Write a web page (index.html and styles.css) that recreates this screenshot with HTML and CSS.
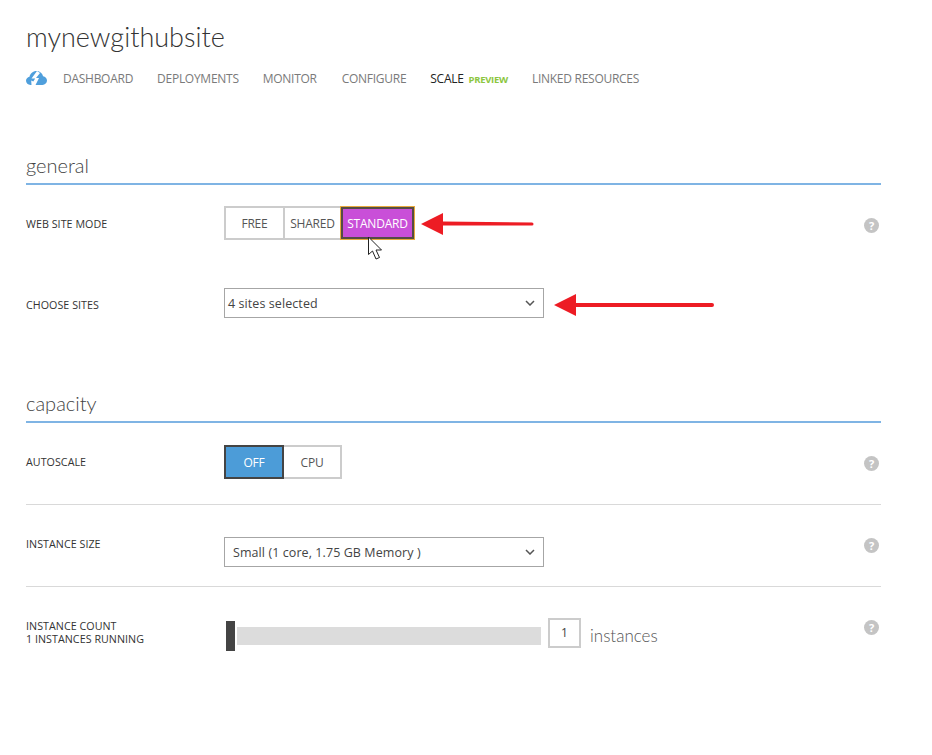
FILE: index.html
```html
<!DOCTYPE html>
<html lang="en">
<head>
  <meta charset="UTF-8" />
  <title>mynewgithubsite - scale</title>
  <link rel="stylesheet" href="styles.css">
</head>
<body>
  <h1 class="site-title">mynewgithubsite</h1>

  <nav class="tabs">
    <svg class="cloud" width="21" height="14" viewBox="0 0 21 14">
      <path fill="#4f9fdc" d="M4.500 14C2 14 0 12 0 9.800C0 7.800 1.500 6.200 3.500 5.800C4.200 2.500 7 0 10.400 0C13.600 0 16.300 2 17.100 5.200C19.300 5.500 21 7.300 21 9.600C21 12 19 14 16.500 14Z"/>
      <path fill="#fff" d="M11 0L5.500 7.500H9.200L7.300 10.500L5.200 9.500L5.500 14H9.500L13 7H10L14 2Z"/>
    </svg>
    <a class="tab">DASHBOARD</a>
    <a class="tab">DEPLOYMENTS</a>
    <a class="tab">MONITOR</a>
    <a class="tab tab-configure">CONFIGURE</a>
    <a class="tab active">SCALE <span class="preview">PREVIEW</span></a>
    <a class="tab">LINKED RESOURCES</a>
  </nav>

  <section class="general">
    <h2 class="section-title">general</h2>

    <div class="row mode-row">
      <label class="row-label">WEB SITE MODE</label>
      <div class="toggle">
        <button class="opt opt-free">FREE</button>
        <button class="opt opt-shared">SHARED</button>
        <button class="opt opt-standard">STANDARD</button>
      </div>
      <span class="help">?</span>

      <svg class="arrow arrow-mode" width="114" height="24" viewBox="0 0 114 24">
        <path fill="#ed1c24" d="M0 12L22 1V9.500L111 10.500A1.500 1.500 0 0 1 111 13.500L22 13.500V23Z"/>
      </svg>
      <svg class="pointer" width="17" height="25" viewBox="0 0 17 25">
        <path fill="#fff" stroke="#222" d="M1.500 1V18.500L5.500 15L9 23L12.500 21.500L9 14H14.500Z"/>
      </svg>
    </div>

    <div class="row sites-row">
      <label class="row-label">CHOOSE SITES</label>
      <div class="select select-sites">
        <span>4 sites selected</span>
        <svg class="chevron" width="10" height="6" viewBox="0 0 10 6"><path fill="none" stroke="#555" stroke-width="1.500" d="M1 1L5 5L9 1"/></svg>
      </div>

      <svg class="arrow arrow-sites" width="160" height="22" viewBox="0 0 160 22">
        <path fill="#ed1c24" d="M0 11L22 0V9L158 9A2 2 0 0 1 158 13L22 13V22Z"/>
      </svg>
    </div>
  </section>

  <section class="capacity">
    <h2 class="section-title">capacity</h2>

    <div class="row autoscale-row">
      <label class="row-label">AUTOSCALE</label>
      <div class="toggle">
        <button class="opt opt-off">OFF</button>
        <button class="opt opt-cpu">CPU</button>
      </div>
      <span class="help">?</span>
    </div>

    <div class="row size-row">
      <label class="row-label">INSTANCE SIZE</label>
      <div class="select select-size">
        <span>Small (1 core, 1.75 GB Memory )</span>
        <svg class="chevron" width="10" height="6" viewBox="0 0 10 6"><path fill="none" stroke="#555" stroke-width="1.500" d="M1 1L5 5L9 1"/></svg>
      </div>
      <span class="help">?</span>
    </div>

    <div class="row count-row">
      <label class="row-label">INSTANCE COUNT<br>1 INSTANCES RUNNING</label>
      <div class="slider">
        <span class="thumb"></span>
        <span class="track"></span>
        <span class="count">1</span>
        <span class="unit">instances</span>
      </div>
      <span class="help">?</span>
    </div>
  </section>
</body>
</html>
```

FILE: styles.css
```css
body {
  margin: 0;
  padding: 0 51px 0 26px;
  background: #fff;
  font-family: "Open Sans", "Noto Sans", sans-serif;
  color: #333;
}
.site-title {
  margin: 0;
  padding-top: 19px;
  height: 35px;
  font-family: Lato, "Open Sans", sans-serif;
  font-size: 27px;
  line-height: 35px;
  font-weight: 300;
  color: #333;
}
.tabs {
  display: flex;
  align-items: center;
  height: 20px;
  margin-top: 14px;
  font-size: 12px;
  color: #7a7a7a;
}
.cloud {
  margin-right: 16px;
}
.tab {
  margin-right: 24px;
  letter-spacing: -0.27px;
}
.tab.active {
  color: #222;
}
.tab-configure {
  margin-left: 1px;
}
.preview {
  margin-left: 2px;
  font-size: 9.500px;
  font-weight: 700;
  color: #8cc63f;
}
.section-title {
  margin: 0;
  height: 24px;
  padding-top: 1px;
  padding-bottom: 6px;
  font-family: Lato, "Open Sans", sans-serif;
  font-size: 20px;
  line-height: 24px;
  font-weight: 300;
  color: #444;
  border-bottom: 2px solid #7fb4e4;
}
.general {
  margin-top: 64px;
}
.row {
  position: relative;
  display: flex;
  align-items: flex-start;
}
.row-label {
  width: 198px;
  flex: none;
  font-size: 10.700px;
  line-height: 13px;
  color: #333;
  letter-spacing: 0.05px;
}
.mode-row { margin-top: 21px; height: 82px; }
.mode-row .row-label { padding-top: 12px; }
.sites-row { height: 102px; }
.sites-row .row-label { padding-top: 11px; }
.autoscale-row { margin-top: 22px; height: 59px; border-bottom: 1px solid #d9d9d9; }
.autoscale-row .row-label { padding-top: 11px; }
.size-row { padding-top: 32px; height: 49px; border-bottom: 1px solid #d9d9d9; }
.size-row .row-label { padding-top: 1px; }
.count-row { padding-top: 34px; }
.count-row .row-label { margin-top: -1px; }
.toggle {
  display: flex;
}
.opt {
  height: 34px;
  padding: 0;
  font-family: inherit;
  font-size: 12px;
  letter-spacing: -0.2px;
  color: #555;
  background: #fff;
  border: 2px solid #ccc;
}
.opt-free { width: 59px; border-right: 0; }
.opt-shared { width: 57px; border-right: 0; }
.opt-standard {
  width: 73px;
  height: 32px;
  margin: 1px;
  color: #fff;
  background: #c94fd8;
  border-color: #544c44;
  box-shadow: 0 0 0 1px #e8a93c;
}
.opt-off {
  width: 60px;
  color: #fff;
  background: #4c9cd8;
  border-color: #444;
}
.opt-cpu { width: 58px; border-left: 0; }
.select {
  display: flex;
  align-items: center;
  justify-content: space-between;
  box-sizing: border-box;
  width: 320px;
  height: 30px;
  padding: 0 8px 0 3px;
  font-size: 12.500px;
  letter-spacing: 0.08px;
  color: #444;
  border: 1px solid #a6a6a6;
}
.select-size {
  padding-left: 8px;
}
.help {
  position: absolute;
  right: 2px;
  top: 12px;
  width: 15px;
  height: 15px;
  border-radius: 50%;
  background: #c4c4c4;
  color: #fff;
  font-size: 11px;
  font-weight: 700;
  line-height: 15px;
  text-align: center;
}
.autoscale-row .help { top: 11px; }
.size-row .help { top: 33px; }
.count-row .help { top: 33px; }
.slider {
  display: flex;
  align-items: center;
  height: 30px;
  margin-left: 2px;
}
.thumb {
  width: 9px;
  height: 30px;
  background: #444;
}
.track {
  width: 304px;
  height: 18px;
  margin-left: 2px;
  background: #dcdcdc;
}
.count {
  box-sizing: border-box;
  width: 33px;
  height: 30px;
  margin-left: 7px;
  margin-bottom: 6px;
  border: 2px solid #ccc;
  font-size: 12px;
  line-height: 26px;
  text-align: center;
  color: #444;
}
.unit {
  margin-left: 9px;
  margin-bottom: 2px;
  font-family: Lato, "Open Sans", sans-serif;
  font-size: 17px;
  font-weight: 300;
  color: #555;
}
.arrow {
  position: absolute;
}
.arrow-mode {
  left: 395px;
  top: 6px;
}
.arrow-sites {
  left: 528px;
  top: 6px;
}
.pointer {
  position: absolute;
  left: 341px;
  top: 30px;
}
```
